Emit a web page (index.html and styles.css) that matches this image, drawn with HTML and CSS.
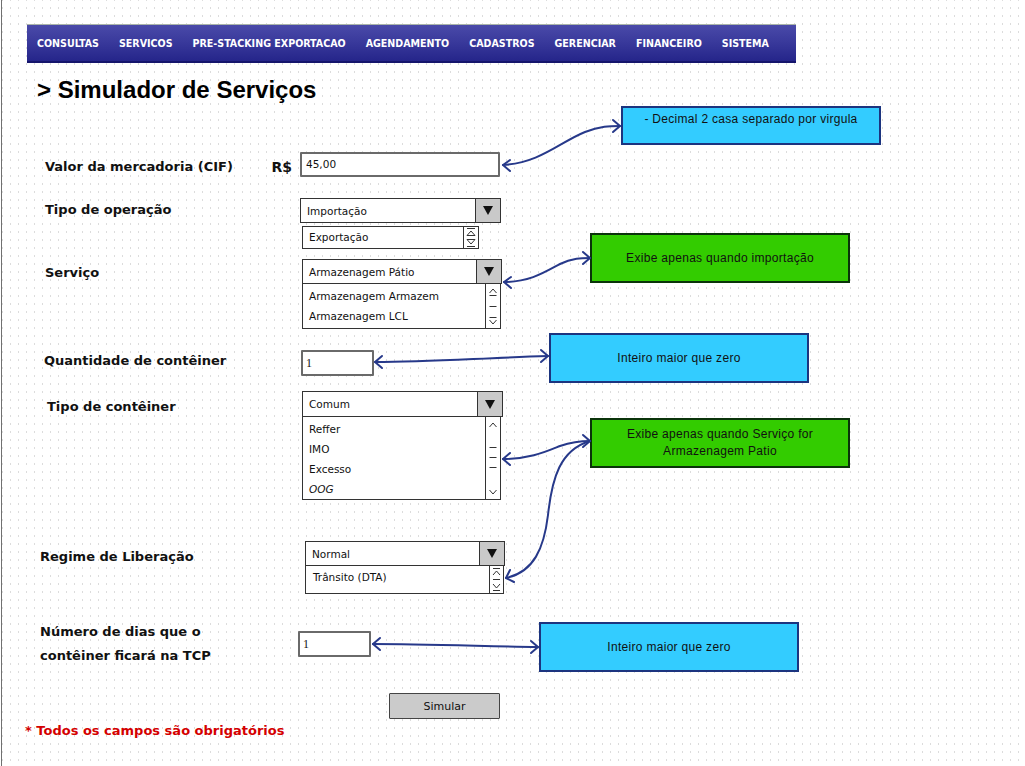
FILE: index.html
```html
<!DOCTYPE html>
<html lang="pt">
<head>
<meta charset="utf-8">
<title>Simulador de Serviços</title>
<link rel="stylesheet" href="styles.css">
</head>
<body>
<div class="page">
  <nav class="menu">
    <span class="menu-item">CONSULTAS</span>
    <span class="menu-item">SERVICOS</span>
    <span class="menu-item">PRE-STACKING EXPORTACAO</span>
    <span class="menu-item">AGENDAMENTO</span>
    <span class="menu-item">CADASTROS</span>
    <span class="menu-item">GERENCIAR</span>
    <span class="menu-item">FINANCEIRO</span>
    <span class="menu-item">SISTEMA</span>
  </nav>

  <h1 class="title">&gt; Simulador de Serviços</h1>

  <div class="form">
    <div class="row r1">
      <div class="label lbl-cif"><span>Valor da mercadoria (CIF)</span><span class="cur">R$</span></div>
      <div class="ctrl">
        <div class="input w200">45,00</div>
      </div>
    </div>

    <div class="row r2">
      <div class="label">Tipo de operação</div>
      <div class="ctrl">
        <div class="select w201"><span class="val">Importação</span><span class="btn"><i class="tri"></i></span></div>
        <div class="list list-sep w177">
          <div class="items one">Exportação</div>
          <div class="scroll">
            <svg width="14" height="21" viewBox="0 0 14 21"><path d="M3 1.5H11M3 8.5L7 4L11 8.5ZM3 12.5L7 17L11 12.5ZM3 19.5H11" fill="none" stroke="#333" stroke-width="1"/></svg>
          </div>
        </div>
      </div>
    </div>

    <div class="row r3">
      <div class="label">Serviço</div>
      <div class="ctrl x2">
        <div class="select w200"><span class="val">Armazenagem Pátio</span><span class="btn"><i class="tri"></i></span></div>
        <div class="list w199">
          <div class="items">
            <div>Armazenagem Armazem</div>
            <div>Armazenagem LCL</div>
          </div>
          <div class="scroll">
            <svg width="14" height="44" viewBox="0 0 14 44"><path d="M3.5 9L7 5L10.5 9M3.5 11.5H10.5M3.5 22.5H10.5M3.5 33.5H10.5M3.5 36L7 40L10.5 36" fill="none" stroke="#333" stroke-width="1"/></svg>
          </div>
        </div>
      </div>
    </div>

    <div class="row r4">
      <div class="label">Quantidade de contêiner</div>
      <div class="ctrl x1">
        <div class="input w73 serif">1</div>
      </div>
    </div>

    <div class="row r5">
      <div class="label">Tipo de contêiner</div>
      <div class="ctrl x2">
        <div class="select w201 h26"><span class="val">Comum</span><span class="btn"><i class="tri"></i></span></div>
        <div class="list w199 tall">
          <div class="items">
            <div>Reffer</div>
            <div>IMO</div>
            <div>Excesso</div>
            <div class="it">OOG</div>
          </div>
          <div class="scroll">
            <svg width="14" height="82" viewBox="0 0 14 82"><path d="M3.5 10L7 6L10.5 10M3.5 30.5H10.5M3.5 40.5H10.5M3.5 50.5H10.5M3.5 73L7 77L10.5 73" fill="none" stroke="#333" stroke-width="1"/></svg>
          </div>
        </div>
      </div>
    </div>

    <div class="row r6">
      <div class="label">Regime de Liberação</div>
      <div class="ctrl x5">
        <div class="select w200"><span class="val">Normal</span><span class="btn"><i class="tri"></i></span></div>
        <div class="list w199 short">
          <div class="items">
            <div>Trânsito (DTA)</div>
          </div>
          <div class="scroll">
            <svg width="13" height="27" viewBox="0 0 13 27"><path d="M3 2.5H10M3 9L6.5 5L10 9M3 13.5H10M3 18L6.5 22L10 18M3 24.5H10" fill="none" stroke="#333" stroke-width="1"/></svg>
          </div>
        </div>
      </div>
    </div>

    <div class="row r7">
      <div class="label">Número de dias que o<br>contêiner ficará na TCP</div>
      <div class="ctrl xm2">
        <div class="input w73 serif">1</div>
      </div>
    </div>
  </div>

  <div class="footer">
    <p class="required">* Todos os campos são obrigatórios</p>
    <button class="submit" type="button">Simular</button>
  </div>
</div>

<div class="note blue n1">- Decimal 2 casa separado por virgula</div>
<div class="note green n2">Exibe apenas quando importação</div>
<div class="note blue n3">Inteiro maior que zero</div>
<div class="note green n4">Exibe apenas quando Serviço for<br>Armazenagem Patio</div>
<div class="note blue n5">Inteiro maior que zero</div>

<svg class="arrows" width="1025" height="766" viewBox="0 0 1025 766">
  <g fill="none" stroke="#27398a" stroke-width="2" stroke-linecap="round" stroke-linejoin="round">
    <path d="M503 165 C540 163 560 142 585 132 C600 126 610 126 620 126"/>
    <path d="M510 160 L503 165 L510 171"/>
    <path d="M613 120 L620 126 L613 132"/>

    <path d="M504 282 C530 282 545 272 560 264 C572 258 582 258 590 258"/>
    <path d="M511 277 L504 282 L511 288"/>
    <path d="M583 252 L590 258 L583 264"/>

    <path d="M375 362 C430 362 480 358 548 356"/>
    <path d="M382 356 L375 362 L382 368"/>
    <path d="M541 350 L548 356 L541 362"/>

    <path d="M503 459 C530 459 545 452 560 446 C575 441 585 441 590 441"/>
    <path d="M510 453 L503 459 L510 465"/>
    <path d="M583 435 L590 441 L583 447"/>

    <path d="M506 578 C534 572 544 548 548 515 C552 478 560 450 590 441"/>
    <path d="M510 570 L506 578 L514 582"/>

    <path d="M373 644 C420 644 480 646 538 647"/>
    <path d="M380 638 L373 644 L380 650"/>
    <path d="M531 641 L538 647 L531 653"/>
  </g>
</svg>
</body>
</html>
```

FILE: styles.css
```css
html, body {
  margin: 0;
  padding: 0;
}

body {
  position: relative;
  width: 1025px;
  height: 766px;
  overflow: hidden;
  background-color: #fff;
  background-image:
    linear-gradient(to bottom, transparent 2px, #fff 2px),
    linear-gradient(to right, #dcdcdc 1px, transparent 1px);
  background-size: 8px 8px;
  background-position: 2px 7px;
  font-family: "DejaVu Sans", sans-serif;
  color: #111;
}

.page {
  margin-left: 1px;
  border-left: 1px solid #707070;
  height: 766px;
  box-sizing: border-box;
  padding-top: 24px;
}

/* ---------- menu ---------- */
.menu {
  margin-left: 25px;
  width: 769px;
  height: 39px;
  box-sizing: border-box;
  border-top: 1px solid #a9b3a9;
  border-bottom: 2px solid #15156c;
  background: linear-gradient(to bottom, #4a4aa9 0%, #3a3a9c 45%, #25258a 100%);
  display: flex;
  align-items: center;
  gap: 20px;
  padding-left: 10px;
}

.menu-item {
  color: #fff;
  font-family: "DejaVu Sans Condensed", "DejaVu Sans", sans-serif;
  font-stretch: condensed;
  font-weight: bold;
  font-size: 10.6px;
  white-space: nowrap;
}

/* ---------- title ---------- */
.title {
  margin: 13px 0 0 35px;
  font-family: "Liberation Sans", Arial, sans-serif;
  font-size: 24px;
  line-height: 28px;
  font-weight: bold;
  color: #000;
}

/* ---------- form ---------- */
.form {
  margin-top: 48px;
  padding-left: 38px;
}

.row {
  display: flex;
  align-items: flex-start;
}

.label {
  width: 260px;
  box-sizing: border-box;
  padding-left: 5px;
  font-size: 13px;
  line-height: 16px;
  font-weight: bold;
  color: #111;
  white-space: nowrap;
}

.lbl-cif {
  display: flex;
  justify-content: space-between;
  padding-right: 8px;
}

.cur {
  font-size: 14px;
}

.r1 .label { padding-top: 7px; }
.r2 { margin-top: 21px; }
.r2 .label { padding-top: 4px; }
.r3 { margin-top: 10px; }
.r3 .label { padding-top: 6px; }
.r4 { margin-top: 21px; }
.r4 .label { padding-top: 3px; padding-left: 4px; }
.r5 { margin-top: 15px; }
.r5 .label { padding-top: 8px; padding-left: 7px; }
.r6 { margin-top: 41px; }
.r6 .label { padding-top: 8px; padding-left: 0; }
.r7 { margin-top: 26px; align-items: center; }
.r7 .label { padding-left: 0; line-height: 24px; }

.ctrl.x1 { margin-left: 1px; }
.ctrl.x2 { margin-left: 2px; }
.ctrl.x5 { margin-left: 5px; }
.ctrl.xm2 { margin-left: -2px; }

.input {
  height: 25px;
  box-sizing: border-box;
  border: 2px solid #6a6a6a;
  border-radius: 1px;
  background: #fff;
  font-size: 10.5px;
  line-height: 21px;
  padding-left: 4px;
  color: #111;
}

.input.serif {
  font-family: "Liberation Serif", serif;
  font-size: 12px;
  height: 26px;
  line-height: 22px;
  padding-left: 3px;
}

.w200 { width: 200px; }
.w201 { width: 201px; }
.w199 { width: 199px; }
.w177 { width: 177px; margin-left: 2px; }
.w73 { width: 73px; }

.select {
  display: flex;
  height: 25px;
  box-sizing: border-box;
  border: 1px solid #333;
  background: #fff;
}

.select.h26 { height: 26px; }

.val {
  flex: 1;
  padding-left: 6px;
  font-size: 10.5px;
  line-height: 24px;
  white-space: nowrap;
}

.btn {
  width: 24px;
  background: #c9c9c9;
  border-left: 1px solid #333;
  display: flex;
  align-items: center;
  justify-content: center;
}

.tri {
  width: 0;
  height: 0;
  border-left: 5px solid transparent;
  border-right: 5px solid transparent;
  border-top: 9px solid #111;
}

.list {
  display: flex;
  box-sizing: border-box;
  border: 1px solid #333;
  border-top: none;
  background: #fff;
  height: 45px;
}

.list-sep {
  margin-top: 3px;
  border-top: 1px solid #333;
  height: 23px;
}

.list.tall { height: 83px; }
.list.short { height: 28px; }

.items {
  flex: 1;
  padding: 2px 0 0 6px;
  font-size: 10.5px;
  line-height: 20px;
  white-space: nowrap;
}

.items.one {
  padding-top: 0;
  line-height: 21px;
}

.list.short .items {
  padding-top: 1px;
  padding-left: 7px;
}

.it { font-style: italic; }

.scroll {
  border-left: 1px solid #333;
  display: flex;
}

.scroll svg { display: block; }

/* ---------- footer ---------- */
.footer {
  display: flex;
  align-items: flex-start;
  margin-top: 25px;
  padding-left: 23px;
}

.required {
  margin: 30px 0 0;
  width: 364px;
  color: #d40000;
  font-size: 13px;
  line-height: 16px;
  font-weight: bold;
  white-space: nowrap;
}

.submit {
  width: 111px;
  height: 26px;
  box-sizing: border-box;
  border: 1px solid #444;
  border-radius: 1px;
  background: #cbcbcb;
  font-family: "DejaVu Sans", sans-serif;
  font-size: 11px;
  color: #111;
  padding: 0;
}

/* ---------- annotations ---------- */
.note {
  position: absolute;
  width: 260px;
  height: 50px;
  box-sizing: border-box;
  border: 2px solid #1c347f;
  font-family: "Liberation Sans", Arial, sans-serif;
  font-size: 12px;
  line-height: 17px;
  letter-spacing: 0.3px;
  color: #111;
  text-align: center;
  display: flex;
  align-items: center;
  justify-content: center;
}

.blue { background: #33ccff; }
.green { background: #33cc00; border-color: #0a330a; }

.n1 { left: 621px; top: 106px; height: 39px; align-items: flex-start; padding-top: 3px; }
.n2 { left: 590px; top: 233px; }
.n3 { left: 549px; top: 333px; }
.n4 { left: 590px; top: 418px; }
.n5 { left: 539px; top: 622px; }

.arrows {
  position: absolute;
  left: 0;
  top: 0;
  pointer-events: none;
}
```
